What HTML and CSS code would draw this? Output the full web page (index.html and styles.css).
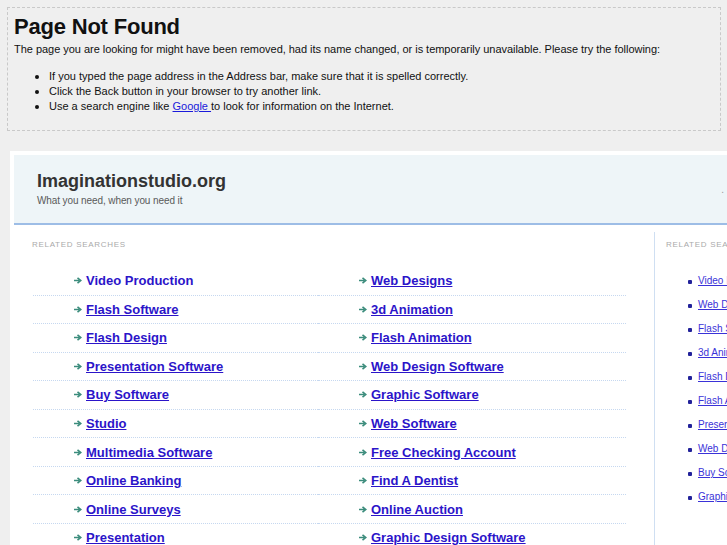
FILE: index.html
```html
<!DOCTYPE html>
<html>
<head>
<meta charset="utf-8">
<title>Page Not Found</title>
<link rel="stylesheet" href="styles.css">
</head>
<body>
<div class="notice">
  <h1>Page Not Found</h1>
  <p>The page you are looking for might have been removed, had its name changed, or is temporarily unavailable. Please try the following:</p>
  <ul>
    <li>If you typed the page address in the Address bar, make sure that it is spelled correctly.</li>
    <li>Click the Back button in your browser to try another link.</li>
    <li>Use a search engine like <a href="#">Google </a> to look for information on the Internet.</li>
  </ul>
</div>

<div class="card">
  <div class="header">
    <div class="brand">
      <div class="site">Imaginationstudio.org</div>
      <div class="tagline">What you need, when you need it</div>
    </div>
    <span class="edge">.</span>
  </div>
  <div class="body">
    <div class="main">
      <div class="label">RELATED SEARCHES</div>
      <div class="grid">
        <div class="item"><span class="arr"><svg width="8" height="7" viewBox="0 0 8 7"><path d="M0 3.5H5.5M3.5 0.8L6.8 3.5L3.5 6.2" fill="none" stroke="#3b8c7c" stroke-width="1.6"/></svg></span><a href="#" class="plain">Video Production</a></div>
        <div class="item"><span class="arr"><svg width="8" height="7" viewBox="0 0 8 7"><path d="M0 3.5H5.5M3.5 0.8L6.8 3.5L3.5 6.2" fill="none" stroke="#3b8c7c" stroke-width="1.6"/></svg></span><a href="#">Web Designs</a></div>
        <div class="item"><span class="arr"><svg width="8" height="7" viewBox="0 0 8 7"><path d="M0 3.5H5.5M3.5 0.8L6.8 3.5L3.5 6.2" fill="none" stroke="#3b8c7c" stroke-width="1.6"/></svg></span><a href="#">Flash Software</a></div>
        <div class="item"><span class="arr"><svg width="8" height="7" viewBox="0 0 8 7"><path d="M0 3.5H5.5M3.5 0.8L6.8 3.5L3.5 6.2" fill="none" stroke="#3b8c7c" stroke-width="1.6"/></svg></span><a href="#">3d Animation</a></div>
        <div class="item"><span class="arr"><svg width="8" height="7" viewBox="0 0 8 7"><path d="M0 3.5H5.5M3.5 0.8L6.8 3.5L3.5 6.2" fill="none" stroke="#3b8c7c" stroke-width="1.6"/></svg></span><a href="#">Flash Design</a></div>
        <div class="item"><span class="arr"><svg width="8" height="7" viewBox="0 0 8 7"><path d="M0 3.5H5.5M3.5 0.8L6.8 3.5L3.5 6.2" fill="none" stroke="#3b8c7c" stroke-width="1.6"/></svg></span><a href="#">Flash Animation</a></div>
        <div class="item"><span class="arr"><svg width="8" height="7" viewBox="0 0 8 7"><path d="M0 3.5H5.5M3.5 0.8L6.8 3.5L3.5 6.2" fill="none" stroke="#3b8c7c" stroke-width="1.6"/></svg></span><a href="#">Presentation Software</a></div>
        <div class="item"><span class="arr"><svg width="8" height="7" viewBox="0 0 8 7"><path d="M0 3.5H5.5M3.5 0.8L6.8 3.5L3.5 6.2" fill="none" stroke="#3b8c7c" stroke-width="1.6"/></svg></span><a href="#">Web Design Software</a></div>
        <div class="item"><span class="arr"><svg width="8" height="7" viewBox="0 0 8 7"><path d="M0 3.5H5.5M3.5 0.8L6.8 3.5L3.5 6.2" fill="none" stroke="#3b8c7c" stroke-width="1.6"/></svg></span><a href="#">Buy Software</a></div>
        <div class="item"><span class="arr"><svg width="8" height="7" viewBox="0 0 8 7"><path d="M0 3.5H5.5M3.5 0.8L6.8 3.5L3.5 6.2" fill="none" stroke="#3b8c7c" stroke-width="1.6"/></svg></span><a href="#">Graphic Software</a></div>
        <div class="item"><span class="arr"><svg width="8" height="7" viewBox="0 0 8 7"><path d="M0 3.5H5.5M3.5 0.8L6.8 3.5L3.5 6.2" fill="none" stroke="#3b8c7c" stroke-width="1.6"/></svg></span><a href="#">Studio</a></div>
        <div class="item"><span class="arr"><svg width="8" height="7" viewBox="0 0 8 7"><path d="M0 3.5H5.5M3.5 0.8L6.8 3.5L3.5 6.2" fill="none" stroke="#3b8c7c" stroke-width="1.6"/></svg></span><a href="#">Web Software</a></div>
        <div class="item"><span class="arr"><svg width="8" height="7" viewBox="0 0 8 7"><path d="M0 3.5H5.5M3.5 0.8L6.8 3.5L3.5 6.2" fill="none" stroke="#3b8c7c" stroke-width="1.6"/></svg></span><a href="#">Multimedia Software</a></div>
        <div class="item"><span class="arr"><svg width="8" height="7" viewBox="0 0 8 7"><path d="M0 3.5H5.5M3.5 0.8L6.8 3.5L3.5 6.2" fill="none" stroke="#3b8c7c" stroke-width="1.6"/></svg></span><a href="#">Free Checking Account</a></div>
        <div class="item"><span class="arr"><svg width="8" height="7" viewBox="0 0 8 7"><path d="M0 3.5H5.5M3.5 0.8L6.8 3.5L3.5 6.2" fill="none" stroke="#3b8c7c" stroke-width="1.6"/></svg></span><a href="#">Online Banking</a></div>
        <div class="item"><span class="arr"><svg width="8" height="7" viewBox="0 0 8 7"><path d="M0 3.5H5.5M3.5 0.8L6.8 3.5L3.5 6.2" fill="none" stroke="#3b8c7c" stroke-width="1.6"/></svg></span><a href="#">Find A Dentist</a></div>
        <div class="item"><span class="arr"><svg width="8" height="7" viewBox="0 0 8 7"><path d="M0 3.5H5.5M3.5 0.8L6.8 3.5L3.5 6.2" fill="none" stroke="#3b8c7c" stroke-width="1.6"/></svg></span><a href="#">Online Surveys</a></div>
        <div class="item"><span class="arr"><svg width="8" height="7" viewBox="0 0 8 7"><path d="M0 3.5H5.5M3.5 0.8L6.8 3.5L3.5 6.2" fill="none" stroke="#3b8c7c" stroke-width="1.6"/></svg></span><a href="#">Online Auction</a></div>
        <div class="item"><span class="arr"><svg width="8" height="7" viewBox="0 0 8 7"><path d="M0 3.5H5.5M3.5 0.8L6.8 3.5L3.5 6.2" fill="none" stroke="#3b8c7c" stroke-width="1.6"/></svg></span><a href="#">Presentation</a></div>
        <div class="item"><span class="arr"><svg width="8" height="7" viewBox="0 0 8 7"><path d="M0 3.5H5.5M3.5 0.8L6.8 3.5L3.5 6.2" fill="none" stroke="#3b8c7c" stroke-width="1.6"/></svg></span><a href="#">Graphic Design Software</a></div>
      </div>
    </div>
    <div class="side">
      <div class="label">RELATED SEARCHES</div>
      <ul class="slist">
        <li><a href="#">Video Production</a></li>
        <li><a href="#">Web Designs</a></li>
        <li><a href="#">Flash Software</a></li>
        <li><a href="#">3d Animation</a></li>
        <li><a href="#">Flash Design</a></li>
        <li><a href="#">Flash Animation</a></li>
        <li><a href="#">Presentation Software</a></li>
        <li><a href="#">Web Design Software</a></li>
        <li><a href="#">Buy Software</a></li>
        <li><a href="#">Graphic Software</a></li>
      </ul>
    </div>
  </div>
</div>
</body>
</html>
```

FILE: styles.css
```css
html, body {
  margin: 0;
  padding: 0;
  overflow: hidden;
}
body {
  background: #efefef;
  font-family: "Liberation Sans", Arial, sans-serif;
  color: #111;
  width: 727px;
  height: 545px;
}
.notice {
  margin: 7px 6px 0 7px;
  border: 1px dashed #c9c9c9;
  padding: 4px 6px 14px 6px;
  height: 104px;
}
.notice h1 {
  margin: 0;
  font-size: 22px;
  line-height: 30px;
  font-weight: bold;
  letter-spacing: -0.2px;
}
.notice p {
  margin: 0;
  font-size: 11px;
  line-height: 15px;
  letter-spacing: -0.03px;
}
.notice ul {
  margin: 12px 0 0 0;
  padding: 0 0 0 35px;
  font-size: 11px;
  line-height: 15px;
  list-style: none;
}
.notice li {
  position: relative;
}
.notice li::before {
  content: "";
  position: absolute;
  left: -14px;
  top: 6px;
  width: 4px;
  height: 4px;
  border-radius: 50%;
  background: #111;
}
.notice a {
  color: #1a1adb;
}
.card {
  margin: 20px 0 0 10px;
  width: 800px;
  background: #fff;
  padding: 4px 0 0 4px;
  height: 420px;
}
.header {
  background: #eef5f8;
  border-bottom: 2px solid #9dbde6;
  height: 68px;
  display: flex;
  justify-content: space-between;
  align-items: center;
}
.brand {
  padding: 16px 0 0 23px;
  align-self: flex-start;
}
.site {
  font-size: 18px;
  font-weight: bold;
  color: #333;
  line-height: 20px;
}
.tagline {
  font-size: 10px;
  color: #5a5a5a;
  margin-top: 4px;
  letter-spacing: -0.1px;
}
.edge {
  color: #999;
  font-size: 10px;
  margin-right: 90px;
}
.body {
  display: flex;
}
.main {
  width: 640px;
  flex-shrink: 0;
  padding-top: 14px;
}
.label {
  font-size: 8px;
  color: #aaa;
  letter-spacing: 0.7px;
  padding-left: 18px;
  line-height: 12px;
}
.grid {
  display: grid;
  grid-template-columns: 285px 308px;
  margin: 16px 0 0 19px;
}
.item {
  display: flex;
  align-items: center;
  height: 27.56px;
  border-bottom: 1px dotted #c6d8f0;
  padding-left: 41px;
}
.item:nth-last-child(-n+2) {
  border-bottom: 0;
}
.arr {
  display: inline-flex;
  width: 12px;
}
.item a {
  font-size: 13px;
  font-weight: bold;
  color: #2b14c9;
}
.item a.plain {
  text-decoration: none;
}
.side {
  flex-shrink: 0;
  border-left: 1px solid #cfdff2;
  margin-top: 7px;
  padding: 7px 0 0 11px;
  height: 320px;
  width: 140px;
}
.side .label {
  padding-left: 0;
}
.slist {
  margin: 18px 0 0 0;
  padding: 0 0 0 32px;
  list-style: none;
}
.slist li {
  font-size: 10px;
  line-height: 24px;
  position: relative;
}
.slist li::before {
  content: "";
  position: absolute;
  left: -10px;
  top: 11px;
  width: 4px;
  height: 4px;
  border-radius: 1px;
  background: #22229a;
}
.slist a {
  color: #3a32d8;
}
```
